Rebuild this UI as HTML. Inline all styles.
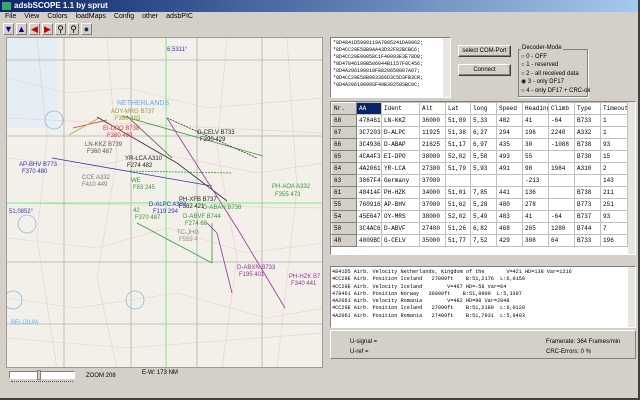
<!DOCTYPE html>
<html><head><meta charset="utf-8"><style>
*{box-sizing:border-box;margin:0;padding:0}
body{width:640px;height:400px;overflow:hidden;background:#d4d0c8;font-family:"Liberation Sans",sans-serif;font-size:7px;position:relative;color:#000}
.abs{position:absolute}
.title{left:0;top:0;width:640px;height:12px;background:linear-gradient(90deg,#0a246a,#a6caf0);color:#fff;font-weight:bold;font-size:8px;line-height:12px;padding-left:14px}
.menu{left:0;top:12px;height:10px;font-size:7px;line-height:10px}
.menu span{margin-left:5px;margin-right:3px}
.tb{top:23px;width:11px;height:12px;border:1px solid;border-color:#fff #808080 #808080 #fff;font-size:9px;line-height:10px;text-align:center}
.map{left:6px;top:37px;width:317px;height:331px;background:#f3f0ea;overflow:hidden;border:1px solid #9a9a9a}
.sunk{border:1px solid;border-color:#808080 #fff #fff #808080}
.mono{font-family:"Liberation Mono",monospace}
.btn{background:#d4d0c8;border:1px solid;border-color:#fff #404040 #404040 #fff;box-shadow:inset -1px -1px #808080;text-align:center;font-size:6px;line-height:10px}
table{border-collapse:collapse;font-family:"Liberation Mono",monospace;font-size:6px}
td{border:1px solid #c0c0c0;height:12px;line-height:11px;padding:0 0 0 2px;white-space:nowrap;overflow:hidden;background:#fff}
td.h{background:#d4d0c8;border-color:#fff #808080 #808080 #fff}
.sb{background:#e8e6e0}
</style></head><body>
<div class="abs title">adsbSCOPE 1.1 by sprut<div class="abs" style="left:2px;top:2px;width:9px;height:8px;background:#3a6;"></div></div>
<div class="abs menu"><span>File</span><span>View</span><span>Colors</span><span>loadMaps</span><span>Config</span><span>other</span><span>adsbPIC</span></div>
<div class="abs tb" style="left:3px;color:#00a">&#9660;</div>
<div class="abs tb" style="left:16px;color:#00a">&#9650;</div>
<div class="abs tb" style="left:29px;color:#c00">&#9664;</div>
<div class="abs tb" style="left:42px;color:#c00">&#9654;</div>
<div class="abs tb" style="left:55px">&#9906;</div>
<div class="abs tb" style="left:68px">&#9906;</div>
<div class="abs tb" style="left:81px;color:#036">&#9679;</div>

<div class="abs map">
<svg width="317" height="331" style="position:absolute;left:0;top:0">
<rect x="0" y="0" width="50" height="90" fill="#e6eef5"/>
<g stroke="#e4c4c4" stroke-width="0.6" fill="none" opacity="0.8">
<path d="M0 40 L60 55 L120 50 L200 70 L317 60"/><path d="M0 120 L80 130 L150 115 L250 135 L317 125"/>
<path d="M0 200 L90 210 L160 190 L240 215 L317 205"/><path d="M0 260 L70 270 L170 255 L260 280 L317 270"/>
<path d="M30 0 L40 100 L30 200 L50 331"/><path d="M100 0 L110 120 L90 240 L110 331"/>
<path d="M220 0 L210 110 L230 220 L215 331"/><path d="M280 0 L290 150 L270 331"/>
<path d="M0 300 L120 310 L317 295"/><path d="M0 80 L317 95"/><path d="M0 165 L317 170"/>
</g>
<g stroke="#b0b0b0" stroke-width="0.8">
<line x1="57" y1="0" x2="57" y2="331"/><line x1="124" y1="0" x2="124" y2="331"/><line x1="190" y1="0" x2="190" y2="331"/><line x1="255" y1="0" x2="255" y2="331"/>
<line x1="0" y1="22" x2="317" y2="22"/><line x1="0" y1="98" x2="317" y2="98"/><line x1="0" y1="224" x2="317" y2="224"/><line x1="0" y1="286" x2="317" y2="286"/>
</g>
<line x1="159" y1="0" x2="159" y2="331" stroke="#7e7" stroke-width="1"/>
<line x1="0" y1="165" x2="317" y2="165" stroke="#7e7" stroke-width="1"/>
<g fill="none" stroke-width="0.8">
<path d="M66 90 L100 82" stroke="#e33"/><path d="M62 97 L92 80" stroke="#aa3"/>
<path d="M90 79 L170 125 L220 163" stroke="#333"/><path d="M120 78 L165 120" stroke="#555"/>
<path d="M115 78 L256 118" stroke="#393"/><path d="M160 80 L250 120" stroke="#333" stroke-dasharray="2 1"/>
<path d="M45 120 L205 148" stroke="#33a"/><path d="M120 133 L225 135" stroke="#393" stroke-dasharray="2 1"/>
<path d="M160 80 L230 190 L278 270" stroke="#939"/><path d="M200 185 L210 195 L225 255" stroke="#939"/>
<path d="M130 185 L205 225" stroke="#393"/><path d="M205 185 L205 225" stroke="#393"/>
</g>
<circle cx="47" cy="82" r="9" fill="none" stroke="#8bd" stroke-width="0.8"/>
<circle cx="20" cy="186" r="9" fill="none" stroke="#8bd" stroke-width="0.8"/>
<circle cx="6" cy="262" r="9" fill="none" stroke="#8bd" stroke-width="0.8"/>
<circle cx="128" cy="262" r="9" fill="none" stroke="#8bd" stroke-width="0.8"/>
<g font-family="Liberation Sans" font-size="6">
<text x="160" y="13" fill="#33c">6,5311°</text>
<text x="110" y="67" fill="#6af" font-size="7">NETHERLANDS</text>
<text x="104" y="75" fill="#993">ADY-MRG B737</text><text x="108" y="82" fill="#993">F380 483</text>
<text x="96" y="92" fill="#e33">EI-DPO B738</text><text x="100" y="99" fill="#e33">F380 493</text>
<text x="78" y="108" fill="#555">LN-KKZ B739</text><text x="80" y="115" fill="#555">F360 487</text>
<text x="190" y="96" fill="#222">G-CELV B733</text><text x="193" y="103" fill="#222">F390 429</text>
<text x="118" y="122" fill="#222">YR-LCA A310</text><text x="120" y="129" fill="#222">F274 482</text>
<text x="12" y="128" fill="#33a">AP-BHV B773</text><text x="15" y="135" fill="#33a">F370 480</text>
<text x="75" y="141" fill="#777">CCE A332</text><text x="75" y="148" fill="#777">F410 449</text>
<text x="124" y="144" fill="#393">WE</text><text x="126" y="151" fill="#393">F83 245</text>
<text x="265" y="150" fill="#393">PH-AOA A332</text><text x="268" y="158" fill="#393">F355 473</text>
<text x="172" y="163" fill="#222">PH-XFB B737</text><text x="172" y="170" fill="#222">F382 421</text>
<text x="142" y="168" fill="#33c">D-ALPC A332</text><text x="146" y="175" fill="#33c">F119 294</text>
<text x="196" y="171" fill="#393">D-ABAN B738</text>
<text x="126" y="174" fill="#393">42</text><text x="128" y="181" fill="#393">F370 487</text>
<text x="176" y="180" fill="#393">D-ABVF B744</text><text x="178" y="187" fill="#393">F274 68</text>
<text x="170" y="196" fill="#888">TC-JHG</text><text x="172" y="203" fill="#888">F559 4</text>
<text x="230" y="231" fill="#939">D-ABXN B733</text><text x="232" y="238" fill="#939">F195 401</text>
<text x="282" y="240" fill="#939">PH-HZK B7</text><text x="284" y="247" fill="#939">F340 441</text>
<text x="2" y="175" fill="#33c">51,0852°</text>
<text x="4" y="286" fill="#6af">BELGIUM</text>
</g>
</svg>
</div>
<div class="abs sunk" style="left:9px;top:371px;width:66px;height:8px;background:#fff"></div>
<div class="abs" style="left:37px;top:370px;width:4px;height:10px;background:#d4d0c8;border:1px solid #808080"></div>
<div class="abs" style="left:11px;top:381px;width:62px;height:1px;border-top:1px dotted #555"></div>
<div class="abs" style="left:86px;top:373px;font-size:6px">ZOOM 208</div>
<div class="abs" style="left:142px;top:370px;font-size:6px">E-W: 173 NM</div>

<div class="abs sunk mono" style="left:330px;top:37px;width:121px;height:61px;background:#fff;font-size:5px;line-height:7px;padding:2px;overflow:hidden;white-space:nowrap">*8D4841D5990119A7805241DA9062;<br>*8D4CC29E58B9AA43D32F82BCBC6;<br>*8D4CC29E99058C1F40093E3E78D8;<br>*8D47846190B506044B1157F8C456;<br>*8D4A206199010F8820650007A67;<br>*8D4CC29E58B983366D3C5D3FB3CR;<br>*8D4A20619099SF40B30250SBC9C;</div>
<div class="abs sb" style="left:443px;top:38px;width:7px;height:59px"></div>
<div class="abs btn" style="left:458px;top:45px;width:53px;height:12px">select COM-Port</div>
<div class="abs btn" style="left:458px;top:64px;width:53px;height:12px">Connect</div>
<div class="abs" style="left:518px;top:49px;width:70px;height:48px;border:1px solid #808080;box-shadow:1px 1px #fff"></div>
<div class="abs" style="left:521px;top:45px;background:#d4d0c8;font-size:6px;padding:0 1px">Decoder-Mode</div>
<div class="abs" style="left:521px;top:53px;font-size:6px;line-height:8.4px">
○ 0 - OFF<br>○ 1 - reserved<br>○ 2 - all received data<br>◉ 3 - only DF17<br>○ 4 - only DF17 + CRC-ok</div>

<div class="abs sunk" style="left:330px;top:101px;width:306px;height:154px;background:#fff;overflow:hidden">
<table style="width:296px;table-layout:fixed">
<colgroup><col style="width:25px"><col style="width:25px"><col style="width:38px"><col style="width:26px"><col style="width:25px"><col style="width:26px"><col style="width:26px"><col style="width:26px"><col style="width:26px"><col style="width:26px"><col style="width:27px"></colgroup>
<tr><td class="h">Nr.</td><td style="background:#0a246a;color:#fff">AA</td><td>Ident</td><td>Alt</td><td>Lat</td><td>long</td><td>Speed</td><td>Heading</td><td>Climb</td><td>Type</td><td>Timeout</td></tr>
<tr><td class="h">68</td><td>478461</td><td>LN-KKZ</td><td>36000</td><td>51,89</td><td>5,33</td><td>482</td><td>41</td><td>-64</td><td>B733</td><td>1</td></tr>
<tr><td class="h">67</td><td>3C7203</td><td>D-ALPC</td><td>11925</td><td>51,38</td><td>6,27</td><td>294</td><td>196</td><td>2240</td><td>A332</td><td>1</td></tr>
<tr><td class="h">66</td><td>3C4936</td><td>D-ABAP</td><td>21625</td><td>51,17</td><td>6,97</td><td>435</td><td>30</td><td>-1088</td><td>B738</td><td>93</td></tr>
<tr><td class="h">65</td><td>4CA4F3</td><td>EI-DPO</td><td>38000</td><td>52,02</td><td>5,58</td><td>493</td><td>55</td><td></td><td>B738</td><td>15</td></tr>
<tr><td class="h">64</td><td>4A2061</td><td>YR-LCA</td><td>27300</td><td>51,79</td><td>5,93</td><td>491</td><td>98</td><td>1984</td><td>A310</td><td>2</td></tr>
<tr><td class="h">63</td><td>3867F4</td><td>Germany</td><td>37000</td><td></td><td></td><td></td><td>-213</td><td></td><td></td><td>143</td></tr>
<tr><td class="h">61</td><td>48414F</td><td>PH-HZK</td><td>34000</td><td>51,01</td><td>7,85</td><td>441</td><td>136</td><td></td><td>B738</td><td>211</td></tr>
<tr><td class="h">55</td><td>760916</td><td>AP-BHV</td><td>37000</td><td>51,62</td><td>5,28</td><td>480</td><td>278</td><td></td><td>B773</td><td>251</td></tr>
<tr><td class="h">54</td><td>45E647</td><td>OY-MRS</td><td>38000</td><td>52,02</td><td>5,49</td><td>483</td><td>41</td><td>-64</td><td>B737</td><td>93</td></tr>
<tr><td class="h">50</td><td>3C4AC6</td><td>D-ABVF</td><td>27400</td><td>51,26</td><td>6,82</td><td>468</td><td>265</td><td>1280</td><td>B744</td><td>7</td></tr>
<tr><td class="h">48</td><td>4009BC</td><td>G-CELV</td><td>35000</td><td>51,77</td><td>7,52</td><td>429</td><td>308</td><td>64</td><td>B733</td><td>196</td></tr>
</table>
<div class="abs sb" style="left:297px;top:0;width:8px;height:152px"></div>
</div>

<div class="abs sunk mono" style="left:330px;top:266px;width:306px;height:62px;background:#fff;font-size:5.2px;line-height:7.3px;padding:2px 1px;white-space:pre;overflow:hidden">4841D5 Airb. Velocity Netherlands, Kingdom of the       V=421 HD=138 Var=1216
4CC29E Airb. Position Iceland   27000ft    B:51,2176  L:6,0150
4CC29E Airb. Velocity Iceland        V=467 HD=-58 Var=64
478461 Airb. Position Norway   36000ft    B:51,8900  L:5,3397
4A2061 Airb. Velocity Romania        V=482 HD=98 Var=2048
4CC29E Airb. Position Iceland   27000ft    B:51,2189  L:6,0120
4A2061 Airb. Position Romania   27400ft    B:51,7931  L:5,9403</div>
<div class="abs sb" style="left:628px;top:267px;width:7px;height:60px"></div>
<div class="abs" style="left:330px;top:330px;width:306px;height:29px;border:1px solid;border-color:#fff #808080 #808080 #fff"></div>
<div class="abs" style="left:350px;top:337px;font-size:6px;line-height:10px">U-signal =<br>U-ref =</div>
<div class="abs" style="left:546px;top:337px;font-size:6px;line-height:10px">Framerate: 364 Frames/min<br>CRC-Errors: 0 %</div>
<div class="abs" style="left:0;top:398px;width:640px;height:2px;background:#404040"></div>
<div class="abs" style="left:638px;top:0;width:2px;height:400px;background:#404040"></div>
</body></html>
